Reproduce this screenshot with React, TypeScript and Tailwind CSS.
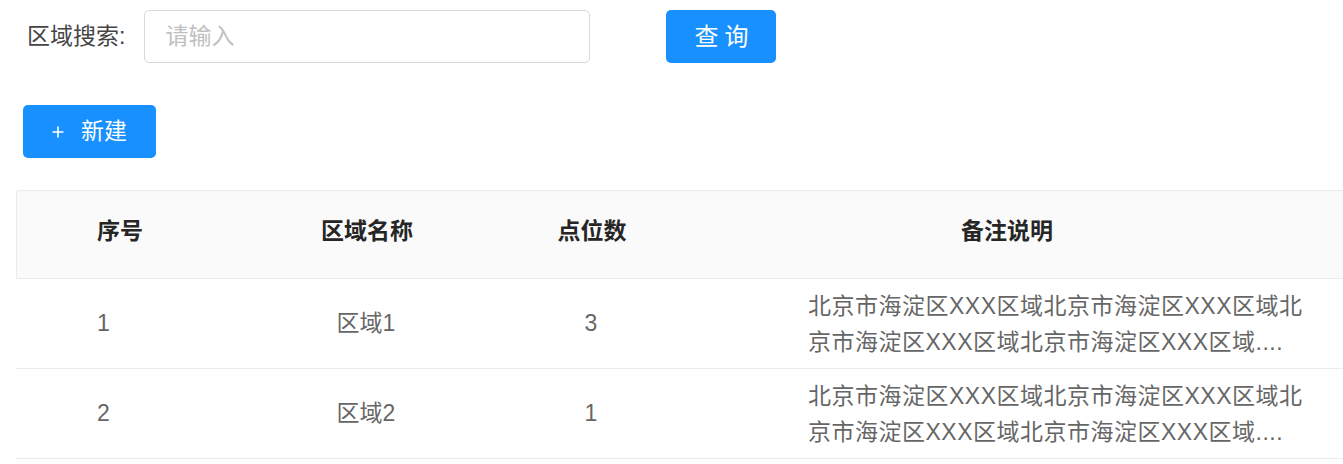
import React from 'react';

type Area = {
    id: number;
    name: string;
    points: number;
    remark: string;
};

const areas: Area[] = [
    { id: 1, name: '区域1', points: 3, remark: '北京市海淀区XXX区域北京市海淀区XXX区域北京市海淀区XXX区域北京市海淀区XXX区域....' },
    { id: 2, name: '区域2', points: 1, remark: '北京市海淀区XXX区域北京市海淀区XXX区域北京市海淀区XXX区域北京市海淀区XXX区域....' },
];

const cols = 'grid grid-cols-[234px_232px_218px_612px_1fr]';

const PlusIcon = () => (
    <svg width="12" height="12" viewBox="0 0 12 12" fill="none" stroke="currentColor" strokeWidth="1.6">
        <path d="M6 0.5v11M0.5 6h11" />
    </svg>
);

const App = () => {
    return (
        <div className="w-[1343px] h-[464px] overflow-hidden bg-white font-['Liberation_Sans','Noto_Sans_CJK_SC',sans-serif] text-[23px]">
            {/* search bar */}
            <div className="flex items-center pt-[10px] pl-[27px]">
                <label className="text-[#454545] leading-none">区域搜索:</label>
                <input
                    className="ml-[19px] w-[446px] h-[53px] border border-[#d9d9d9] rounded-[5px] px-[20px] text-[23px] outline-none placeholder:text-[#c0c0c0]"
                    placeholder="请输入"
                />
                <button className="ml-[76px] w-[110px] h-[53px] rounded-[5px] bg-[#1890ff] text-white text-[24px] leading-none tracking-[6px] pl-[6px]">
                    查询
                </button>
            </div>

            {/* actions */}
            <div className="pl-[23px] pt-[42px]">
                <button className="flex items-center w-[133px] h-[53px] rounded-[5px] bg-[#1890ff] text-white pl-[29px] leading-none">
                    <PlusIcon />
                    <span className="ml-[17px]">新建</span>
                </button>
            </div>

            {/* table */}
            <div className="ml-[16px] mt-[32px] w-[1327px]">
                <div className={`${cols} h-[89px] bg-[#fafafa] border-t border-l border-b border-[#ebebeb] rounded-tl-[4px] font-bold text-[#262626]`}>
                    <div className="flex items-center pl-[80px] pb-[6px]">序号</div>
                    <div className="flex items-center justify-center pb-[6px]">区域名称</div>
                    <div className="flex items-center justify-center pb-[6px]">点位数</div>
                    <div className="flex items-center justify-center pb-[6px]">备注说明</div>
                    <div />
                </div>
                {areas.map((a) => (
                    <div key={a.id} className={`${cols} h-[90px] border-b border-[#ebebeb] text-[#666666]`}>
                        <div className="flex items-center pl-[81px]">{a.id}</div>
                        <div className="flex items-center justify-center">{a.name}</div>
                        <div className="flex items-center justify-center">{a.points}</div>
                        <div className="flex items-center pl-[108px]">
                            <p className="w-[505px] leading-[36px] tracking-[0.5px] line-clamp-2 break-all">{a.remark}</p>
                        </div>
                        <div />
                    </div>
                ))}
            </div>
        </div>
    );
};

export default App;
